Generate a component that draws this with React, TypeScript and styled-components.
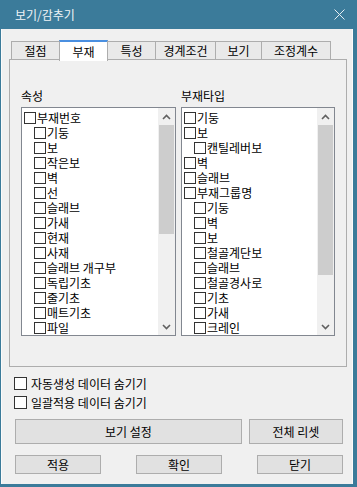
import React from 'react';
import styled, { createGlobalStyle } from 'styled-components';

const GlobalStyle = createGlobalStyle`
html, body {
  margin: 0;
  padding: 0;
  background: #3b7b9a;
}
* { box-sizing: border-box; }
body {
  font-family: "Noto Sans CJK KR", "Noto Sans", sans-serif;
  font-size: 12px;
  color: #000;
}
`

const Frame = styled.div`
width: 357px;
height: 487px;
background: #3b7b9a;
display: flex;
flex-direction: column;
padding: 0 4px 3px 1px;
`
const TitleBar = styled.div`
height: 29px;
display: flex;
align-items: center;
justify-content: space-between;
padding: 0 6px 0 14px;
color: #eef3f6;
font-size: 12px;
`
const CloseX = styled.div`
width: 16px;
height: 16px;
display: flex;
align-items: center;
justify-content: center;
`
const Client = styled.div`
flex: 1;
background: #f0f0f0;
border-left: 1px solid #fbfbfb;
border-right: 1px solid #fbfbfb;
padding: 10px 0 0 7px;
display: flex;
flex-direction: column;
`
const TabRow = styled.div`
display: flex;
align-items: flex-end;
height: 21px;
padding-left: 2px;
position: relative;
z-index: 1;
`
const Tab = styled.div<{ $w: number; $active?: boolean }>`
width: ${p => p.$w}px;
height: ${p => (p.$active ? 21 : 19)}px;
margin-right: -1px;
display: flex;
align-items: center;
justify-content: center;
font-size: 12px;
line-height: 1;
border: 1px solid #adadad;
border-bottom: ${p => (p.$active ? 'none' : '1px solid #adadad')};
border-top: ${p => (p.$active ? '2px solid #4a8fe0' : '1px solid #adadad')};
padding-top: ${p => (p.$active ? 1 : 0)}px;
margin-bottom: ${p => (p.$active ? -1 : 0)}px;
background: ${p => (p.$active ? '#ffffff' : '#e9e9e9')};
`
const Panel = styled.div`
width: 338px;
height: 308px;
border: 1px solid #adadad;
margin-top: -1px;
padding: 29px 11px 0 11px;
display: flex;
gap: 5px;
`
const Column = styled.div<{ $w: number }>`
width: ${p => p.$w}px;
display: flex;
flex-direction: column;
`
const Label = styled.div`
height: 18px;
font-size: 12px;
line-height: 14px;
`
const ListBox = styled.div`
height: 229px;
border: 1px solid #828790;
background: #fff;
display: flex;
overflow: hidden;
`
const Items = styled.div`
flex: 1;
padding: 2px 0 0 2px;
overflow: hidden;
`
const Row = styled.div<{ $indent: number }>`
height: 15px;
display: flex;
align-items: center;
padding-left: ${p => p.$indent * 10}px;
white-space: nowrap;
font-size: 12px;
line-height: 15px;
`
const Box = styled.span`
width: 12px;
height: 12px;
border: 1px solid #333;
background: #fff;
flex: none;
margin-right: 1px;
`
const ScrollBar = styled.div`
width: 17px;
background: #f0f0f0;
display: flex;
flex-direction: column;
align-items: center;
`
const Arrow = styled.div`
height: 17px;
width: 17px;
display: flex;
align-items: center;
justify-content: center;
`
const Track = styled.div`
flex: 1;
width: 100%;
display: flex;
flex-direction: column;
padding: 0 1px;
`
const Thumb = styled.div<{ $h: number }>`
height: ${p => p.$h}px;
background: #cdcdcd;
`
const Options = styled.div`
display: flex;
flex-direction: column;
gap: 6px;
padding: 10px 0 0 5px;
`
const Option = styled.label`
display: flex;
align-items: center;
height: 13px;
font-size: 12px;
line-height: 13px;
gap: 4px;
`
const OptBox = styled.span`
width: 13px;
height: 13px;
border: 1px solid #333;
background: #fff;
`
const BtnRow = styled.div<{ $top: number }>`
display: flex;
justify-content: space-between;
padding: ${p => p.$top}px 9px 0 6px;
`
const Button = styled.div<{ $w: number; $h: number }>`
width: ${p => p.$w}px;
height: ${p => p.$h}px;
background: #e1e1e1;
border: 1px solid #adadad;
display: flex;
align-items: center;
justify-content: center;
font-size: 12px;
line-height: 1;
`

const leftItems: [string, number][] = [
  ['부재번호', 0], ['기둥', 1], ['보', 1], ['작은보', 1], ['벽', 1], ['선', 1],
  ['슬래브', 1], ['가새', 1], ['현재', 1], ['사재', 1], ['슬래브 개구부', 1],
  ['독립기초', 1], ['줄기초', 1], ['매트기초', 1], ['파일', 1], ['프리캐스트', 1],
]
const rightItems: [string, number][] = [
  ['기둥', 0], ['보', 0], ['캔틸레버보', 1], ['벽', 0], ['슬래브', 0], ['부재그룹명', 0],
  ['기둥', 1], ['벽', 1], ['보', 1], ['철골계단보', 1], ['슬래브', 1], ['철골경사로', 1],
  ['기초', 1], ['가새', 1], ['크레인', 1], ['조적벽', 1],
]

const Chevron = ({ up }: { up?: boolean }) => (
  <svg width="9" height="6" viewBox="0 0 9 6">
    <path d={up ? 'M1 5 L4.5 1.5 L8 5' : 'M1 1 L4.5 4.5 L8 1'} fill="none" stroke="#606060" strokeWidth="1.6" />
  </svg>
)

function List({ items, thumb }: { items: [string, number][]; thumb: number }) {
  return (
    <ListBox>
      <Items>
        {items.map(([t, lv], i) => (
          <Row key={i} $indent={lv}><Box />{t}</Row>
        ))}
      </Items>
      <ScrollBar>
        <Arrow><Chevron up /></Arrow>
        <Track><Thumb $h={thumb} /></Track>
        <Arrow><Chevron /></Arrow>
      </ScrollBar>
    </ListBox>
  )
}

export default function App() {
  const tabs: [string, number][] = [['절점', 49], ['부재', 49], ['특성', 49], ['경계조건', 61], ['보기', 47], ['조정계수', 70]]
  return (
    <>
      <GlobalStyle />
      <Frame>
        <TitleBar>
          <span>보기/감추기</span>
          <CloseX>
            <svg width="11" height="11" viewBox="0 0 11 11">
              <path d="M0.5 0.5 L10.5 10.5 M10.5 0.5 L0.5 10.5" stroke="#e4edf2" strokeWidth="1" />
            </svg>
          </CloseX>
        </TitleBar>
        <Client>
          <TabRow>
            {tabs.map(([t, w]) => <Tab key={t} $w={w} $active={t === '부재'}>{t}</Tab>)}
          </TabRow>
          <Panel>
            <Column $w={155}>
              <Label>속성</Label>
              <List items={leftItems} thumb={109} />
            </Column>
            <Column $w={154}>
              <Label>부재타입</Label>
              <List items={rightItems} thumb={150} />
            </Column>
          </Panel>
          <Options>
            <Option><OptBox />자동생성 데이터 숨기기</Option>
            <Option><OptBox />일괄적용 데이터 숨기기</Option>
          </Options>
          <BtnRow $top={10}>
            <Button $w={227} $h={25}>보기 설정</Button>
            <Button $w={94} $h={25}>전체 리셋</Button>
          </BtnRow>
          <BtnRow $top={11}>
            <Button $w={86} $h={19}>적용</Button>
            <Button $w={86} $h={19}>확인</Button>
            <Button $w={86} $h={19}>닫기</Button>
          </BtnRow>
        </Client>
      </Frame>
    </>
  )
}
